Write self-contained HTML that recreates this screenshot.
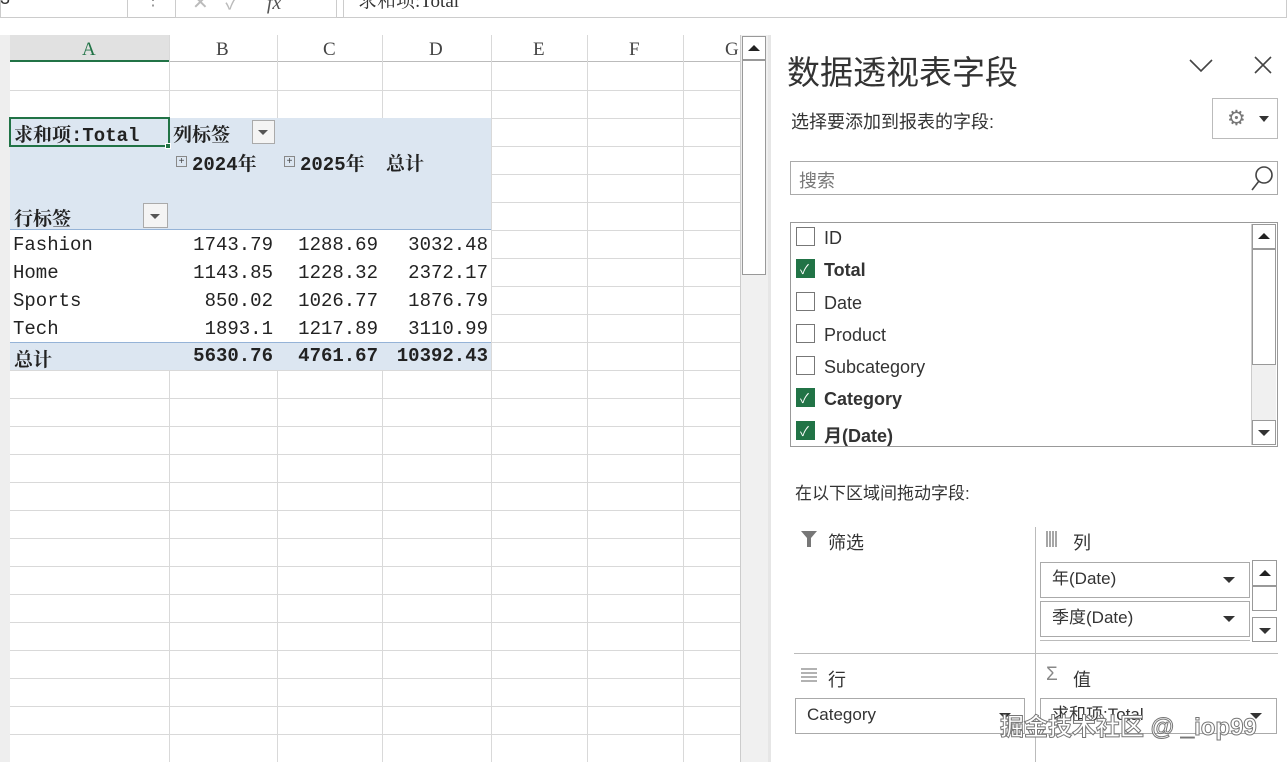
<!DOCTYPE html>
<html><head><meta charset="utf-8"><style>
*{margin:0;padding:0;box-sizing:border-box}
body{width:1287px;height:762px;overflow:hidden;background:#fff;position:relative;font-family:"Liberation Sans","Noto Sans CJK SC",sans-serif;color:#222}
.a{position:absolute}
.vl{position:absolute;width:1px;background:#d9d9d9}
.hl{position:absolute;height:1px;background:#d9d9d9}
.cell{position:absolute;font-family:"Liberation Mono","Noto Serif CJK SC",monospace;font-size:19px;white-space:nowrap}
.num{text-align:right}
.b{font-weight:bold}
.cb{position:absolute;left:796px;width:19px;height:19px;border:1.5px solid #777;background:#fff}
.cb.on{background:#217346;border-color:#217346}
.cb.on::after{content:"✓";color:#fff;font-size:13px;position:absolute;left:3px;top:-1px}
.fl{position:absolute;left:824px;font-size:18px;color:#333}
.drop{position:absolute;border:1px solid #aaa;background:#fff;font-size:17px;padding-left:11px;line-height:32px;color:#333}
.tri{position:absolute;width:0;height:0;border-left:6px solid transparent;border-right:6px solid transparent;border-top:6px solid #333}
.up{position:absolute;width:0;height:0;border-left:6px solid transparent;border-right:6px solid transparent;border-bottom:6px solid #222}
</style></head><body>
<!-- toolbar -->
<div class="a" style="left:0;top:0;width:1287px;height:18px;background:#fff;border-bottom:1px solid #c8c8c8"></div>
<div class="a" style="left:0;top:-4px;width:128px;height:22px;border:1px solid #ccc;border-top:none"></div>
<div class="a" style="left:0;top:-12px;font-size:18px;color:#333">3</div>
<div class="a" style="left:145px;top:-10px;color:#888">⋮</div>
<div class="a" style="left:175px;top:-4px;width:162px;height:22px;border:1px solid #ccc;border-top:none"></div>
<div class="a" style="left:192px;top:-14px;color:#bbb;font-size:20px">✕ &nbsp; ✓ &nbsp; &nbsp; <i style="color:#555;font-family:'Liberation Serif'">fx</i></div>
<div class="a" style="left:343px;top:-4px;width:944px;height:22px;border:1px solid #ccc;border-top:none"></div>
<div class="a" style="left:358px;top:-14px;font-size:19px;color:#333;font-family:'Liberation Serif','Noto Serif CJK SC',serif">求和项:Total</div>
<!-- sheet -->
<div class="a" style="left:0;top:35px;width:10px;height:727px;background:#eee"></div>
<div class="a" style="left:10px;top:35px;width:730px;height:27px;background:#fff;border-bottom:1px solid #bbb"></div>
<div class="a" style="left:10px;top:35px;width:159px;height:27px;background:#e1e1e1;border-bottom:2px solid #217346"></div>
<div class="a" style="left:0;top:35px;width:740px;height:27px;font-family:'Liberation Serif',serif;font-size:19px;color:#444;line-height:29px">
<span class="a" style="left:82px;color:#217346">A</span><span class="a" style="left:216px">B</span><span class="a" style="left:323px">C</span><span class="a" style="left:429px">D</span><span class="a" style="left:533px">E</span><span class="a" style="left:629px">F</span><span class="a" style="left:725px">G</span></div>
<!-- grid lines -->
<div class="vl" style="left:169px;top:35px;height:83px"></div><div class="vl" style="left:169px;top:370px;height:392px"></div>
<div class="vl" style="left:277px;top:35px;height:83px"></div><div class="vl" style="left:277px;top:370px;height:392px"></div>
<div class="vl" style="left:382px;top:35px;height:83px"></div><div class="vl" style="left:382px;top:370px;height:392px"></div>
<div class="vl" style="left:491px;top:35px;height:727px"></div>
<div class="vl" style="left:587px;top:35px;height:727px"></div>
<div class="vl" style="left:683px;top:35px;height:727px"></div>
<div class="hl" style="left:10px;top:90px;width:730px"></div>
<div class="hl" style="left:10px;top:118px;width:730px"></div>
<div class="hl" style="left:491px;top:146px;width:249px"></div>
<div class="hl" style="left:491px;top:174px;width:249px"></div>
<div class="hl" style="left:491px;top:202px;width:249px"></div>
<div class="hl" style="left:491px;top:230px;width:249px"></div>
<div class="hl" style="left:491px;top:258px;width:249px"></div>
<div class="hl" style="left:491px;top:286px;width:249px"></div>
<div class="hl" style="left:491px;top:314px;width:249px"></div>
<div class="hl" style="left:491px;top:342px;width:249px"></div>
<div class="hl" style="left:10px;top:370px;width:730px"></div>
<div class="hl" style="left:10px;top:398px;width:730px"></div>
<div class="hl" style="left:10px;top:426px;width:730px"></div>
<div class="hl" style="left:10px;top:454px;width:730px"></div>
<div class="hl" style="left:10px;top:482px;width:730px"></div>
<div class="hl" style="left:10px;top:510px;width:730px"></div>
<div class="hl" style="left:10px;top:538px;width:730px"></div>
<div class="hl" style="left:10px;top:566px;width:730px"></div>
<div class="hl" style="left:10px;top:594px;width:730px"></div>
<div class="hl" style="left:10px;top:622px;width:730px"></div>
<div class="hl" style="left:10px;top:650px;width:730px"></div>
<div class="hl" style="left:10px;top:678px;width:730px"></div>
<div class="hl" style="left:10px;top:706px;width:730px"></div>
<div class="hl" style="left:10px;top:734px;width:730px"></div>
<!-- pivot bg -->
<div class="a" style="left:10px;top:118px;width:481px;height:112px;background:#dce6f1;border-bottom:1px solid #95b3d7"></div>
<div class="a" style="left:10px;top:342px;width:481px;height:28px;background:#dce6f1;border-top:1px solid #95b3d7"></div>
<div class="a" style="left:9px;top:117px;width:161px;height:30px;border:2px solid #217346"></div>
<div class="a" style="left:165px;top:143px;width:6px;height:6px;background:#217346;border:1px solid #fff"></div>
<div class="cell b" style="left:14px;top:120px">求和项:Total</div>
<div class="cell b" style="left:173px;top:120px">列标签</div>
<div class="a" style="left:252px;top:120px;width:23px;height:24px;border:1px solid #aaa;background:#f4f4f4"><div class="tri" style="left:5px;top:9px;border-width:5px 5px 0;border-top-color:#555"></div></div>
<div class="a" style="left:176px;top:156px;width:11px;height:11px;border:1px solid #888;font-size:10px;line-height:9px;text-align:center;color:#444">+</div>
<div class="cell b" style="left:192px;top:149px">2024年</div>
<div class="a" style="left:284px;top:156px;width:11px;height:11px;border:1px solid #888;font-size:10px;line-height:9px;text-align:center;color:#444">+</div>
<div class="cell b" style="left:300px;top:149px">2025年</div>
<div class="cell b" style="left:386px;top:149px">总计</div>
<div class="cell b" style="left:14px;top:204px">行标签</div>
<div class="a" style="left:143px;top:203px;width:25px;height:25px;border:1px solid #aaa;background:#f4f4f4"><div class="tri" style="left:6px;top:10px;border-width:5px 5px 0;border-top-color:#555"></div></div>
<div class="cell" style="left:13px;top:234px">Fashion</div>
<div class="cell" style="left:13px;top:262px">Home</div>
<div class="cell" style="left:13px;top:290px">Sports</div>
<div class="cell" style="left:13px;top:318px">Tech</div>
<div class="cell b" style="left:14px;top:345px">总计</div>
<div class="cell num" style="left:169px;width:104px;top:234px">1743.79</div>
<div class="cell num" style="left:277px;width:101px;top:234px">1288.69</div>
<div class="cell num" style="left:382px;width:106px;top:234px">3032.48</div>
<div class="cell num" style="left:169px;width:104px;top:262px">1143.85</div>
<div class="cell num" style="left:277px;width:101px;top:262px">1228.32</div>
<div class="cell num" style="left:382px;width:106px;top:262px">2372.17</div>
<div class="cell num" style="left:169px;width:104px;top:290px">850.02</div>
<div class="cell num" style="left:277px;width:101px;top:290px">1026.77</div>
<div class="cell num" style="left:382px;width:106px;top:290px">1876.79</div>
<div class="cell num" style="left:169px;width:104px;top:318px">1893.1</div>
<div class="cell num" style="left:277px;width:101px;top:318px">1217.89</div>
<div class="cell num" style="left:382px;width:106px;top:318px">3110.99</div>
<div class="cell num b" style="left:169px;width:104px;top:345px">5630.76</div>
<div class="cell num b" style="left:277px;width:101px;top:345px">4761.67</div>
<div class="cell num b" style="left:382px;width:106px;top:345px">10392.43</div>
<!-- scrollbar -->
<div class="a" style="left:740px;top:35px;width:28px;height:727px;background:#f0f0f0;border-left:1px solid #ccc"></div>
<div class="a" style="left:742px;top:36px;width:24px;height:24px;background:#fff;border:1px solid #999"><div class="up" style="left:5px;top:8px"></div></div>
<div class="a" style="left:742px;top:60px;width:24px;height:215px;background:#fff;border:1px solid #999"></div>
<!-- panel -->
<div class="a" style="left:768px;top:35px;width:3px;height:727px;background:#e6e6e6"></div>
<div class="a" style="left:787px;top:46px;font-size:33px;color:#333">数据透视表字段</div>
<svg class="a" style="left:1189px;top:58px" width="24" height="16"><path d="M1 2L12 13L23 2" fill="none" stroke="#444" stroke-width="1.6"/></svg>
<svg class="a" style="left:1254px;top:56px" width="18" height="18"><path d="M1 1L17 17M17 1L1 17" fill="none" stroke="#444" stroke-width="1.6"/></svg>
<div class="a" style="left:791px;top:108px;font-size:18px;color:#333">选择要添加到报表的字段:</div>
<div class="a" style="left:1212px;top:98px;width:66px;height:41px;border:1px solid #bbb;background:#fff"><span class="a" style="left:14px;top:7px;font-size:21px;color:#777">⚙</span><div class="tri" style="left:46px;top:17px;border-width:6px 5px 0;border-top-color:#333"></div></div>
<div class="a" style="left:790px;top:161px;width:488px;height:34px;border:1px solid #aaa"></div>
<div class="a" style="left:799px;top:167px;font-size:18px;color:#777">搜索</div>
<svg class="a" style="left:1248px;top:164px" width="28" height="28"><circle cx="16" cy="11" r="8" fill="none" stroke="#444" stroke-width="1.6"/><line x1="11" y1="17" x2="4" y2="26" stroke="#444" stroke-width="1.6"/></svg>
<div class="a" style="left:790px;top:222px;width:488px;height:225px;border:1px solid #999"></div>
<div class="a" style="left:1251px;top:224px;width:25px;height:221px;background:#f0f0f0;border-left:1px solid #ccc"></div>
<div class="a" style="left:1252px;top:224px;width:24px;height:25px;border:1px solid #999;background:#fff"><div class="up" style="left:5px;top:8px"></div></div>
<div class="a" style="left:1252px;top:249px;width:24px;height:116px;border:1px solid #999;background:#fff"></div>
<div class="a" style="left:1252px;top:420px;width:24px;height:25px;border:1px solid #999;background:#fff"><div class="tri" style="left:5px;top:9px"></div></div>
<div class="cb" style="top:227px"></div><div class="fl" style="top:228px">ID</div>
<div class="cb on" style="top:259px"></div><div class="fl b" style="top:260px">Total</div>
<div class="cb" style="top:292px"></div><div class="fl" style="top:293px">Date</div>
<div class="cb" style="top:324px"></div><div class="fl" style="top:325px">Product</div>
<div class="cb" style="top:356px"></div><div class="fl" style="top:357px">Subcategory</div>
<div class="cb on" style="top:388px"></div><div class="fl b" style="top:389px">Category</div>
<div class="cb on" style="top:421px"></div><div class="fl b" style="top:422px">月(Date)</div>
<div class="a" style="left:795px;top:479px;font-size:17px;color:#333">在以下区域间拖动字段:</div>
<div class="a" style="left:1035px;top:527px;width:1px;height:235px;background:#bbb"></div>
<div class="a" style="left:794px;top:653px;width:484px;height:1px;background:#bbb"></div>
<svg class="a" style="left:800px;top:530px" width="18" height="18"><path d="M1 1H17L11 8V17H7V8Z" fill="#777"/></svg>
<div class="a" style="left:828px;top:529px;font-size:18px;color:#333">筛选</div>
<svg class="a" style="left:1046px;top:531px" width="14" height="16"><path d="M1 0V16M4 0V16M7 0V16M10 0V16" stroke="#888" stroke-width="1.5"/></svg>
<div class="a" style="left:1073px;top:529px;font-size:18px;color:#333">列</div>
<div class="drop" style="left:1040px;top:562px;width:210px;height:36px">年(Date)</div><div class="tri" style="left:1223px;top:577px"></div>
<div class="drop" style="left:1040px;top:601px;width:210px;height:36px">季度(Date)</div><div class="tri" style="left:1223px;top:616px"></div>
<div class="a" style="left:1040px;top:640px;width:210px;height:3px;border-top:1px solid #bbb"></div>
<div class="a" style="left:1252px;top:560px;width:25px;height:26px;border:1px solid #999"><div class="up" style="left:6px;top:9px"></div></div>
<div class="a" style="left:1252px;top:586px;width:25px;height:25px;border:1px solid #999"></div>
<div class="a" style="left:1252px;top:617px;width:25px;height:25px;border:1px solid #999"><div class="tri" style="left:6px;top:10px"></div></div>
<svg class="a" style="left:801px;top:668px" width="16" height="14"><path d="M0 1H16M0 5H16M0 9H16M0 13H16" stroke="#999" stroke-width="1.5"/></svg>
<div class="a" style="left:828px;top:666px;font-size:18px;color:#333">行</div>
<div class="a" style="left:1046px;top:664px;font-size:19px;color:#888">Σ</div>
<div class="a" style="left:1073px;top:666px;font-size:18px;color:#333">值</div>
<div class="drop" style="left:795px;top:698px;width:230px;height:36px">Category</div><div class="tri" style="left:999px;top:713px"></div>
<div class="drop" style="left:1040px;top:698px;width:237px;height:36px">求和项:Total</div><div class="tri" style="left:1250px;top:713px"></div>
<div class="a" style="left:1000px;top:707px;font-size:24px;color:#fff;-webkit-text-stroke:1px #777;font-weight:bold">掘金技术社区 @ _iop99</div>
</body></html>
